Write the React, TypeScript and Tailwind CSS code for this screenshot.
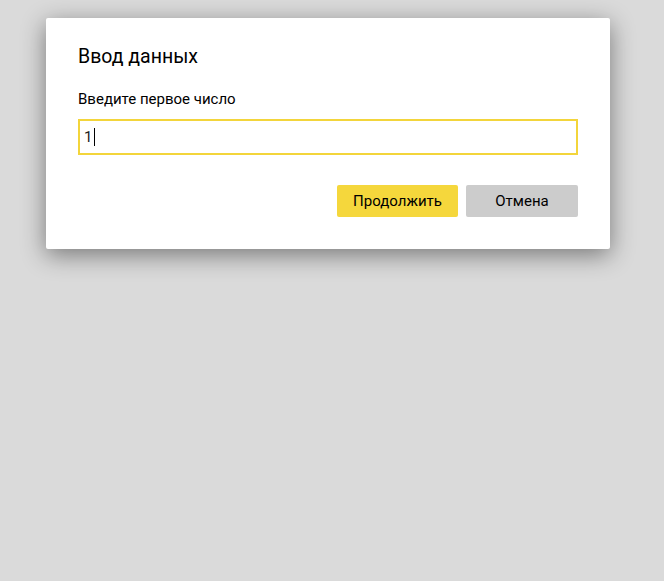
export default function App() {
  return (
    <div className="min-h-[581px] bg-[#dadada] pl-[46px] pt-[18px] font-['Roboto',sans-serif]">
      <div className="w-[564px] rounded-[2px] bg-white px-8 pb-8 pt-[27px] shadow-[0_6px_24px_rgba(0,0,0,0.45)]">
        <h1 className="text-[19.5px] leading-[24px] text-black">Ввод данных</h1>
        <p className="mt-5 text-[15px] leading-[20px] text-black">Введите первое число</p>
        <div className="mt-[10px] flex h-9 items-center border-2 border-[#f3d53b] px-[4px] text-[15px] text-[#222]">
          <span>1</span>
          <span className="ml-[2px] h-[18px] w-px bg-black" />
        </div>
        <div className="mt-[30px] flex justify-end gap-2">
          <button className="h-8 w-[121px] rounded-[2px] bg-[#f5d73c] text-[15px] text-black">Продолжить</button>
          <button className="h-8 w-[112px] rounded-[2px] bg-[#cccccc] text-[15px] text-black">Отмена</button>
        </div>
      </div>
    </div>
  );
}
